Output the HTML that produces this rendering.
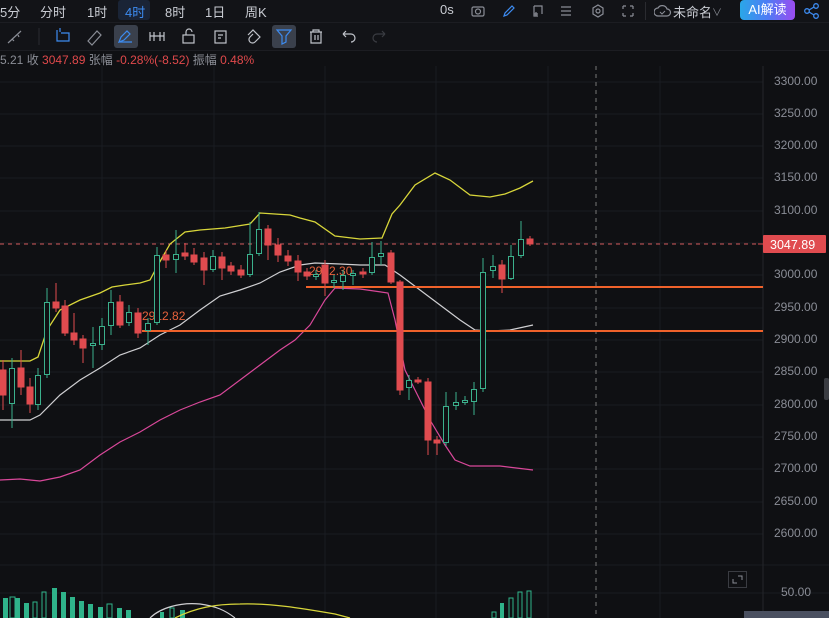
<!DOCTYPE html>
<html><head><meta charset="utf-8"><style>
body{margin:0;width:829px;height:618px;overflow:hidden;background:#0f1013;font-family:"Liberation Sans","Noto Sans CJK SC",sans-serif;position:relative}
.top{position:absolute;left:0;top:0;width:829px;height:22px;background:#121317;border-bottom:1px solid #1c1d22}
.t{position:absolute;top:2px;font-size:13px;color:#c9ccd3}
.row2{position:absolute;top:23px;left:0;width:829px;height:27px;background:#121317;border-bottom:1px solid #1c1d22}
.info{position:absolute;top:51px;left:0;font-size:12px;color:#8b8e96;white-space:nowrap}
.info b{font-weight:normal;color:#e0494b}
.pl{position:absolute;left:774px;font-size:12px;color:#8a8d96}
</style></head><body>
<div class="top">
<span class="t" style="left:0">5分</span><span class="t" style="left:40px">分时</span><span class="t" style="left:87px">1时</span>
<span style="position:absolute;left:118px;top:0;width:32px;height:20px;background:#1a2436;border-radius:3px"></span>
<span class="t" style="left:125px;color:#3d8bf0">4时</span><span class="t" style="left:165px">8时</span><span class="t" style="left:205px">1日</span><span class="t" style="left:245px">周K</span>
<span class="t" style="left:440px">0s</span>
<svg style="position:absolute;left:470px;top:3px" width="180" height="16" fill="none" stroke-width="1.2">
<rect x="2" y="4" width="12" height="9" rx="1.5" stroke="#8a8d96"/><circle cx="8" cy="8.5" r="2.5" stroke="#8a8d96"/>
<path d="M34 13l1-3 7-7 2 2-7 7z" stroke="#3d8bf0"/>
<path d="M64 3h8v8M64 3v10h4M66 9v4M64 11h4" stroke="#8a8d96"/>
<path d="M91 4h10M91 8h10M91 12h10" stroke="#8a8d96"/>
<path d="M128 2l5 3v6l-5 3-5-3V5z" stroke="#8a8d96"/><circle cx="128" cy="8" r="2" stroke="#8a8d96"/>
<path d="M153 3h3M153 3v3M163 3h-3M163 3v3M153 13h3M153 13v-3M163 13h-3M163 13v-3" stroke="#8a8d96"/>
</svg>
<span style="position:absolute;left:645px;top:2px;width:1px;height:18px;background:#2a2b30"></span>
<svg style="position:absolute;left:654px;top:3px" width="18" height="16"><path d="M4 13a4 4 0 010-8 5 5 0 019 1 3.5 3.5 0 010 7z" fill="none" stroke="#8a8d96" stroke-width="1.2"/><path d="M6 9l2 2 3-3" fill="none" stroke="#8a8d96"/></svg>
<span class="t" style="left:673px">未命名</span><span class="t" style="left:712px;font-size:10px;top:4px;color:#8a8d96">∨</span>
<span style="position:absolute;left:740px;top:0;width:55px;height:20px;border-radius:4px;background:linear-gradient(90deg,#2aa7e8,#4d7cf5,#9b4cf0);color:#fff;font-size:13px;text-align:center;line-height:19px">AI解读</span>
<svg style="position:absolute;left:803px;top:2px" width="18" height="18" fill="none" stroke="#3d8bf0" stroke-width="1.3"><circle cx="4" cy="9" r="2.3"/><circle cx="13" cy="4" r="2.3"/><circle cx="13" cy="14" r="2.3"/><path d="M6 8l5-3M6 10l5 3"/></svg>
</div>
<div class="row2">
<svg width="400" height="27" fill="none" stroke-width="1.2">
<path d="M8 20l13-12M12 16l2 2M18 12l1 2" stroke="#8a8d96"/>
<line x1="39" y1="5" x2="39" y2="22" stroke="#26282d"/>
<path d="M57 7v11h12V10h-8" stroke="#3d8bf0"/><path d="M60 5v4" stroke="#3d8bf0"/>
<path d="M88 18l9-10 4 4-9 10z" stroke="#8a8d96"/>
<rect x="114" y="2" width="24" height="23" rx="3" fill="#3a404c"/><path d="M119 19l2-5 6-6 3 3-6 6zM119 19h13" stroke="#3d8bf0"/>
<path d="M150 9v9M154 9v9M160 9v9M164 9v9M150 13h14" stroke="#c0c3ca"/>
<rect x="183" y="12" width="11" height="8" stroke="#c0c3ca"/><path d="M186 12V9a3 3 0 016 0" stroke="#c0c3ca"/>
<rect x="215" y="8" width="11" height="12" stroke="#c0c3ca"/><path d="M218 12h5M218 15h3" stroke="#c0c3ca"/>
<path d="M248 12l5-5 7 7-5 5a3 3 0 01-5-5l3-3" stroke="#c0c3ca"/>
<rect x="272" y="2" width="24" height="23" rx="3" fill="#3a404c"/><path d="M277 7h14l-5 6v6l-4 2v-8z" stroke="#3d8bf0"/>
<path d="M310 9h12M313 9V7h6v2M311 9v11h10V9M315 12v5M318 12v5" stroke="#c0c3ca"/>
<path d="M343 11h8a4 4 0 010 8M343 11l3-3M343 11l3 3" stroke="#c0c3ca"/>
<path d="M385 11h-8a4 4 0 000 8M385 11l-3-3M385 11l-3 3" stroke="#3a3c42"/>
</svg>
</div>
<div class="info">5.21 收 <b>3047.89</b> 张幅 <b>-0.28%(-8.52)</b> 振幅 <b>0.48%</b></div>
<svg style="position:absolute;left:0;top:66px" width="829" height="552">
<g stroke="#1a1c21" stroke-width="1">
<line x1="102" y1="0" x2="102" y2="552"/><line x1="214" y1="0" x2="214" y2="552"/><line x1="325" y1="0" x2="325" y2="552"/><line x1="436" y1="0" x2="436" y2="552"/><line x1="548" y1="0" x2="548" y2="552"/><line x1="660" y1="0" x2="660" y2="552"/>
<line x1="0" y1="16" x2="763" y2="16"/><line x1="0" y1="48" x2="763" y2="48"/><line x1="0" y1="80" x2="763" y2="80"/><line x1="0" y1="112" x2="763" y2="112"/><line x1="0" y1="145" x2="763" y2="145"/><line x1="0" y1="177" x2="763" y2="177"/><line x1="0" y1="209" x2="763" y2="209"/><line x1="0" y1="242" x2="763" y2="242"/><line x1="0" y1="274" x2="763" y2="274"/><line x1="0" y1="306" x2="763" y2="306"/><line x1="0" y1="339" x2="763" y2="339"/><line x1="0" y1="371" x2="763" y2="371"/><line x1="0" y1="403" x2="763" y2="403"/><line x1="0" y1="436" x2="763" y2="436"/><line x1="0" y1="468" x2="763" y2="468"/>
<line x1="0" y1="499" x2="829" y2="499"/><line x1="0" y1="527" x2="829" y2="527"/>
<line x1="763" y1="0" x2="763" y2="552" stroke="#24262b"/>
</g>
<line x1="596" y1="0" x2="596" y2="552" stroke="#777" stroke-dasharray="4,4"/>
<line x1="0" y1="178" x2="763" y2="178" stroke="#d2575a" stroke-dasharray="4,4" stroke-width="1"/>
</svg>
<svg style="position:absolute;left:0;top:0" width="829" height="618">
<polyline fill="none" stroke="#d8d63a" stroke-width="1.3" points="0,361 30,361 38,357 47,330 60,310 80,300 100,293 112,287 125,285 140,283 150,280 158,265 170,244 185,232 200,230 225,228 250,224 260,213 275,214 290,215 300,218 315,222 335,236 360,239 382,238 392,214 400,205 415,185 435,173 450,180 470,195 490,197 505,194 520,188 533,181"/>
<polyline fill="none" stroke="#cfcfd2" stroke-width="1.2" points="0,420 30,420 40,415 60,395 80,380 100,368 120,355 140,348 160,335 180,325 200,310 220,296 240,290 260,283 280,272 300,265 315,263 340,264 360,265 385,265 400,275 420,290 440,305 460,320 475,330 490,331 510,330 533,325"/>
<polyline fill="none" stroke="#d9489a" stroke-width="1.2" points="0,480 20,479 40,481 60,477 80,470 100,455 120,442 140,432 160,420 180,410 200,402 220,395 240,380 260,365 280,350 295,340 310,325 325,300 335,288 360,289 388,293 395,320 405,370 420,400 430,420 445,445 455,460 470,466 500,466 533,470"/>
<line x1="306" y1="287" x2="763" y2="287" stroke="#f0622b" stroke-width="2"/>
<line x1="142" y1="331" x2="763" y2="331" stroke="#f0622b" stroke-width="2"/>
<text x="142" y="320" font-size="12" fill="#e8623c" font-family="Liberation Sans">2912.82</text>
<text x="309" y="275" font-size="12" fill="#e8623c" font-family="Liberation Sans">2982.30</text>
<g stroke-width="1">
<g stroke="#e04b4f" fill="#e04b4f">
<line x1="3" y1="360" x2="3" y2="410"/><rect x="0" y="370" width="6" height="25"/>
<line x1="21" y1="350" x2="21" y2="395"/><rect x="18" y="368" width="6" height="19"/>
<line x1="30" y1="378" x2="30" y2="413"/><rect x="27" y="387" width="6" height="17"/>
<line x1="56" y1="283" x2="56" y2="312"/><rect x="53" y="302" width="6" height="6"/>
<line x1="65" y1="300" x2="65" y2="336"/><rect x="62" y="306" width="6" height="27"/>
<line x1="74" y1="313" x2="74" y2="345"/><rect x="71" y="333" width="6" height="7"/>
<line x1="83" y1="335" x2="83" y2="363"/><rect x="80" y="339" width="6" height="9"/>
<line x1="120" y1="295" x2="120" y2="328"/><rect x="117" y="302" width="6" height="23"/>
<line x1="138" y1="308" x2="138" y2="338"/><rect x="135" y="313" width="6" height="20"/>
<line x1="166" y1="250" x2="166" y2="268"/><rect x="163" y="255" width="6" height="5"/>
<line x1="185" y1="243" x2="185" y2="260"/><rect x="182" y="253" width="6" height="3"/>
<line x1="194" y1="248" x2="194" y2="265"/><rect x="191" y="255" width="6" height="7"/>
<line x1="204" y1="252" x2="204" y2="285"/><rect x="201" y="258" width="6" height="12"/>
<line x1="222" y1="252" x2="222" y2="280"/><rect x="219" y="257" width="6" height="11"/>
<line x1="231" y1="262" x2="231" y2="275"/><rect x="228" y="266" width="6" height="5"/>
<line x1="241" y1="265" x2="241" y2="278"/><rect x="238" y="270" width="6" height="5"/>
<line x1="268" y1="225" x2="268" y2="260"/><rect x="265" y="229" width="6" height="16"/>
<line x1="278" y1="238" x2="278" y2="262"/><rect x="275" y="245" width="6" height="10"/>
<line x1="288" y1="250" x2="288" y2="266"/><rect x="285" y="256" width="6" height="5"/>
<line x1="298" y1="255" x2="298" y2="281"/><rect x="295" y="261" width="6" height="11"/>
<line x1="307" y1="268" x2="307" y2="280"/><rect x="304" y="272" width="6" height="4"/>
<line x1="325" y1="260" x2="325" y2="296"/><rect x="322" y="265" width="6" height="18"/>
<line x1="363" y1="268" x2="363" y2="278"/><rect x="360" y="272" width="6" height="2"/>
<line x1="391" y1="250" x2="391" y2="284"/><rect x="388" y="253" width="6" height="29"/>
<line x1="400" y1="280" x2="400" y2="395"/><rect x="397" y="282" width="6" height="108"/>
<line x1="418" y1="377" x2="418" y2="384"/><rect x="415" y="380" width="6" height="2"/>
<line x1="428" y1="378" x2="428" y2="455"/><rect x="425" y="382" width="6" height="58"/>
<line x1="437" y1="436" x2="437" y2="455"/><rect x="434" y="440" width="6" height="3"/>
<line x1="502" y1="260" x2="502" y2="293"/><rect x="499" y="265" width="6" height="14"/>
<line x1="530" y1="236" x2="530" y2="246"/><rect x="527" y="239" width="6" height="5"/>
</g>
<g stroke="#3bb08c" fill="#0f1013">
<line x1="12" y1="358" x2="12" y2="428"/><rect x="9.5" y="368.5" width="5" height="35"/>
<line x1="38" y1="368" x2="38" y2="410"/><rect x="35.5" y="375.5" width="5" height="29"/>
<line x1="47" y1="288" x2="47" y2="378"/><rect x="44.5" y="302.5" width="5" height="72"/>
<line x1="93" y1="327" x2="93" y2="368"/><rect x="90.5" y="343.5" width="5" height="2"/>
<line x1="102" y1="318" x2="102" y2="350"/><rect x="99.5" y="326.5" width="5" height="18"/>
<line x1="111" y1="290" x2="111" y2="335"/><rect x="108.5" y="302.5" width="5" height="23"/>
<line x1="129" y1="305" x2="129" y2="326"/><rect x="126.5" y="312.5" width="5" height="10"/>
<line x1="148" y1="318" x2="148" y2="345"/><rect x="145.5" y="323.5" width="5" height="7"/>
<line x1="157" y1="247" x2="157" y2="325"/><rect x="154.5" y="255.5" width="5" height="67"/>
<line x1="176" y1="230" x2="176" y2="273"/><rect x="173.5" y="254.5" width="5" height="5"/>
<line x1="213" y1="250" x2="213" y2="272"/><rect x="210.5" y="256.5" width="5" height="13"/>
<line x1="250" y1="222" x2="250" y2="277"/><rect x="247.5" y="254.5" width="5" height="20"/>
<line x1="259" y1="212" x2="259" y2="256"/><rect x="256.5" y="229.5" width="5" height="24"/>
<line x1="316" y1="270" x2="316" y2="280"/><rect x="313.5" y="274.5" width="5" height="2"/>
<line x1="334" y1="275" x2="334" y2="288"/><rect x="331.5" y="280.5" width="5" height="2"/>
<line x1="343" y1="270" x2="343" y2="290"/><rect x="340.5" y="275.5" width="5" height="6"/>
<line x1="353" y1="270" x2="353" y2="285"/><rect x="350.5" y="273.5" width="5" height="2"/>
<line x1="372" y1="242" x2="372" y2="275"/><rect x="369.5" y="257.5" width="5" height="15"/>
<line x1="381" y1="241" x2="381" y2="265"/><rect x="378.5" y="253.5" width="5" height="3"/>
<line x1="409" y1="375" x2="409" y2="400"/><rect x="406.5" y="380.5" width="5" height="7"/>
<line x1="446" y1="392" x2="446" y2="446"/><rect x="443.5" y="406.5" width="5" height="36"/>
<line x1="456" y1="392" x2="456" y2="410"/><rect x="453.5" y="402.5" width="5" height="3"/>
<line x1="465" y1="396" x2="465" y2="405"/><rect x="462.5" y="400.5" width="5" height="2"/>
<line x1="474" y1="382" x2="474" y2="415"/><rect x="471.5" y="389.5" width="5" height="12"/>
<line x1="483" y1="258" x2="483" y2="392"/><rect x="480.5" y="272.5" width="5" height="116"/>
<line x1="493" y1="255" x2="493" y2="278"/><rect x="490.5" y="266.5" width="5" height="4"/>
<line x1="511" y1="245" x2="511" y2="280"/><rect x="508.5" y="256.5" width="5" height="22"/>
<line x1="521" y1="221" x2="521" y2="258"/><rect x="518.5" y="239.5" width="5" height="16"/>
</g>
</g>
<g fill="#2fb38a">
<rect x="3" y="598" width="5" height="20"/><rect x="10" y="597" width="5" height="21" fill="none" stroke="#2fb38a"/><rect x="15" y="598" width="5" height="20"/><rect x="24" y="603" width="5" height="15"/><rect x="33" y="602" width="4" height="16" fill="none" stroke="#2fb38a"/><rect x="42" y="592" width="4" height="26" fill="none" stroke="#2fb38a"/><rect x="52" y="588" width="5" height="30"/><rect x="61" y="592" width="5" height="26"/><rect x="70" y="597" width="5" height="21"/><rect x="79" y="601" width="5" height="17"/><rect x="88" y="604" width="5" height="14"/><rect x="98" y="607" width="5" height="11"/><rect x="107" y="604" width="5" height="14" fill="none" stroke="#2fb38a"/><rect x="117" y="608" width="5" height="10"/><rect x="126" y="610" width="5" height="8"/>
<rect x="160" y="612" width="4" height="6"/><rect x="170" y="608" width="4" height="10" fill="none" stroke="#2fb38a"/><rect x="180" y="610" width="5" height="8"/>
<rect x="492" y="612" width="4" height="6" fill="none" stroke="#2fb38a"/><rect x="500" y="603" width="4" height="15"/><rect x="509" y="598" width="4" height="20" fill="none" stroke="#2fb38a"/><rect x="518" y="592" width="4" height="26" fill="none" stroke="#2fb38a"/><rect x="527" y="591" width="4" height="27" fill="none" stroke="#2fb38a"/>
</g>
<path d="M150 618C160 608 180 602 200 604C215 606 225 610 235 618" fill="none" stroke="#cfcfd2" stroke-width="1.2"/>
<path d="M175 618C195 608 215 604 240 604C270 603 300 608 335 614L350 618" fill="none" stroke="#d8d63a" stroke-width="1.3"/>
<rect x="728.5" y="571.5" width="18" height="16" fill="none" stroke="#3a3c42"/><path d="M733 579v4h4M742 580v-4h-4" fill="none" stroke="#8a8d96"/>
<rect x="763" y="235" width="63" height="18" fill="#e04b4f" rx="1"/>
<line x1="758" y1="244" x2="763" y2="244" stroke="#e04b4f"/>
<text x="770" y="249" font-size="12.5" fill="#fff" font-family="Liberation Sans">3047.89</text>
<rect x="744" y="611" width="85" height="10" fill="#4a5060"/>
</svg>
<div class="pl" style="top:74px">3300.00</div><div class="pl" style="top:106px">3250.00</div><div class="pl" style="top:138px">3200.00</div><div class="pl" style="top:170px">3150.00</div><div class="pl" style="top:203px">3100.00</div><div class="pl" style="top:267px">3000.00</div><div class="pl" style="top:300px">2950.00</div><div class="pl" style="top:332px">2900.00</div><div class="pl" style="top:364px">2850.00</div><div class="pl" style="top:397px">2800.00</div><div class="pl" style="top:429px">2750.00</div><div class="pl" style="top:461px">2700.00</div><div class="pl" style="top:494px">2650.00</div><div class="pl" style="top:526px">2600.00</div>
<div class="pl" style="top:585px;left:781px">50.00</div>
<div style="position:absolute;left:824px;top:378px;width:5px;height:22px;background:#3a3c42;border-radius:2px"></div>
</body></html>
